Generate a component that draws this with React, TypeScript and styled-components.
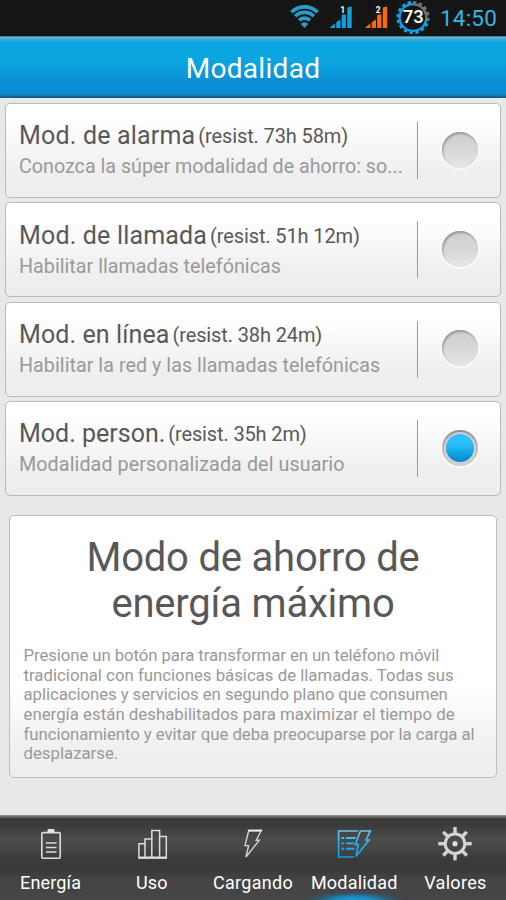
import React from 'react';
import styled, { createGlobalStyle } from 'styled-components';

const GlobalStyle = createGlobalStyle`
  * { box-sizing: border-box; }
  html, body { margin: 0; padding: 0; overflow: hidden; }
  body { font-family: Roboto, "Liberation Sans", sans-serif; }
  h1, h2, p { margin: 0; font-weight: 400; }
`;

const Screen = styled.div`
  width: 506px;
  height: 900px;
  display: flex;
  flex-direction: column;
  background: #e8e8e8;
  overflow: hidden;
`;

const StatusBar = styled.div`
  flex: none;
  height: 36px;
  display: flex;
  justify-content: flex-end;
  padding-right: 9px;
  background: #151515;
`;

const StatusIcons = styled.svg`
  display: block;
  flex: none;
  margin-right: 7px;
`;

const Clock = styled.div`
  width: 58px;
  font-size: 22.5px;
  line-height: 36px;
  letter-spacing: 0.2px;
  text-align: right;
  color: #33b5e5;
`;

const Header = styled.header`
  flex: none;
  height: 62px;
  padding-top: 3px;
  text-align: center;
  background: linear-gradient(
    #1c5d7c 0, #5fb3d6 1px, #5fb3d6 3px, #35a9d6 3px, #35a9d6 5px,
    #0ba5e0 5px, #0ba5e0 24px, #0a8fd6 46px, #0a8fd6 56px, #1681b8 59px,
    #155b80 61px, #155b80 62px
  );
`;

const HeaderTitle = styled.h1`
  font-size: 28px;
  line-height: 60px;
  letter-spacing: 0.3px;
  color: #fff;
`;

const ModeList = styled.div`
  flex: none;
  display: flex;
  flex-direction: column;
  gap: 4.4px;
  padding: 4px 5px 0;
  border-top: 1px solid #d9f1f9;
`;

const ModeRow = styled.div`
  height: 95px;
  display: flex;
  align-items: center;
  border: 1px solid #b9b9b9;
  border-radius: 5px;
  background: linear-gradient(#fff 0, #fff 18%, #f0eff0 72%, #eeeded 100%);
`;

const ModeText = styled.div`
  width: 411px;
  flex: none;
  align-self: stretch;
  padding: 17.3px 0 0 13px;
`;

const TitleLine = styled.div`
  height: 30px;
  display: flex;
  align-items: flex-start;
  line-height: 30px;
  white-space: nowrap;
  color: #585858;
`;

const ModeName = styled.h2<{ $tracking: number }>`
  font-size: 25px;
  letter-spacing: ${(p) => p.$tracking}px;
`;

const Endurance = styled.span<{ $tracking: number }>`
  margin-left: 3px;
  font-size: 20px;
  letter-spacing: ${(p) => p.$tracking}px;
`;

const Description = styled.p<{ $tracking: number }>`
  margin-top: 3px;
  font-size: 19.7px;
  line-height: 26px;
  letter-spacing: ${(p) => p.$tracking}px;
  white-space: nowrap;
  color: #999;
`;

const Divider = styled.div`
  width: 1px;
  height: 57px;
  background: #999;
`;

const RadioArea = styled.div`
  flex: 1;
  display: flex;
  justify-content: center;
  padding: 0 0 2px 1px;
`;

const Radio = styled.div<{ $selected: boolean }>`
  width: 36px;
  height: 36px;
  display: flex;
  align-items: center;
  justify-content: center;
  border-radius: 50%;
  background: ${(p) =>
    p.$selected
      ? 'linear-gradient(#8b8b8b, #b9b9b9 45%, #d6d6d6)'
      : 'linear-gradient(#cfcfcf, #d6d6d6 45%, #e6e6e6)'};
  box-shadow: ${(p) =>
    p.$selected
      ? '0 1px 1px 1px #fdfdfd, inset 0 0 1px #aaa'
      : '0 1px 1px 1px #fafafa, inset 1px 2px 2px #999'};
`;

const RadioRing = styled.div`
  width: 32px;
  height: 32px;
  display: flex;
  align-items: center;
  justify-content: center;
  border-radius: 50%;
  background: #d0d0d0;
`;

const RadioDot = styled.div`
  width: 28px;
  height: 28px;
  border-radius: 50%;
  background: linear-gradient(#31c1ff 0, #2abbfa 42%, #14a9e6 60%, #0a86d2);
`;

const InfoCard = styled.section`
  flex: none;
  height: 263px;
  margin: 19px 9px 0;
  padding: 19px 13px 0;
  border: 1px solid #bdbdbd;
  border-radius: 5px;
  background: linear-gradient(#fff 0, #fff 66%, #f1f0f0 88%, #eee 100%);
`;

const InfoTitle = styled.h2`
  font-size: 40px;
  line-height: 46px;
  letter-spacing: -0.2px;
  text-align: center;
  color: #585858;
`;

const InfoText = styled.p`
  margin-top: 19px;
  padding-left: 0.5px;
  font-size: 16.8px;
  line-height: 19.65px;
  white-space: nowrap;
  color: #999;
`;

const InfoLine = styled.span<{ $tracking: number }>`
  display: block;
  letter-spacing: ${(p) => p.$tracking}px;
`;

const TabBar = styled.nav`
  flex: none;
  height: 85px;
  margin-top: auto;
  display: grid;
  grid-template-columns: repeat(5, 1fr);
  background: linear-gradient(
    #a9abaa 0, #6e706f 1px, #6e706f 2px, #4b4d4c 3px, #3a3a3a 4px, #3b3b3b 10px,
    #4a4c4b 24px, #454746 34px, #3a3a3a 44px, #393939 54px, #434343 64px, #464646 100%
  );
`;

const Tab = styled.div<{ $active: boolean }>`
  display: flex;
  flex-direction: column;
  align-items: center;
  padding-top: 9px;
  background: ${(p) =>
    p.$active ? 'radial-gradient(ellipse 50px 9px at 50% 100%, #1b9fd8 0, #1d86b8 40%, rgba(24,110,152,.45) 70%, transparent 100%)' : 'none'};
`;

const TabIcon = styled.svg`
  display: block;
  width: 40px;
  height: 40px;
`;

const TabLabel = styled.span<{ $tracking: number }>`
  margin-top: 8px;
  font-size: 18px;
  line-height: 22px;
  letter-spacing: ${(p) => p.$tracking}px;
  white-space: nowrap;
  color: #fff;
`;

const modes = [
  { name: 'Mod. de alarma', t: 0.18, endurance: '(resist. 73h 58m)', et: -0.12, text: 'Conozca la súper modalidad de ahorro: so...', dt: 0 },
  { name: 'Mod. de llamada', t: 0.17, endurance: '(resist. 51h 12m)', et: -0.12, text: 'Habilitar llamadas telefónicas', dt: 0.03 },
  { name: 'Mod. en línea', t: 0.1, endurance: '(resist. 38h 24m)', et: -0.12, text: 'Habilitar la red y las llamadas telefónicas', dt: 0.05 },
  { name: 'Mod. person.', t: 0, endurance: '(resist. 35h 2m)', et: -0.14, text: 'Modalidad personalizada del usuario', dt: 0.1, selected: true },
];

const infoLines = [
  { text: 'Presione un botón para transformar en un teléfono móvil', t: -0.09 },
  { text: 'tradicional con funciones básicas de llamadas. Todas sus', t: 0 },
  { text: 'aplicaciones y servicios en segundo plano que consumen', t: -0.07 },
  { text: 'energía están deshabilitados para maximizar el tiempo de', t: 0.02 },
  { text: 'funcionamiento y evitar que deba preocuparse por la carga al', t: -0.06 },
  { text: 'desplazarse.', t: 0 },
];

const SignalBars = ({ x, color, sim }: { x: number; color: string; sim: string }) => (
  <g transform={`translate(${x} 0)`}>
    <g fill={color}>
      <path d="M0 28 L5.4 23.2 V28 Z" />
      <path d="M6.7 28V22.3L11 19.5V28Z" />
      <path d="M12.2 28V14.5H16.4V28Z" />
      <path d="M17.8 28V7.6L22.2 6.6V28Z" />
    </g>
    <text x="13.3" y="13" textAnchor="middle" fontSize="8.5" fontWeight="700" fill="#fff" fontFamily="Roboto, sans-serif">
      {sim}
    </text>
  </g>
);

const StatusGraphics = () => (
  <StatusIcons width="145" height="36" viewBox="287 0 145 36">
    <g fill="none" stroke="#2b9bcb" strokeWidth="3.7">
      <path d="M291.5 12.2 A18.5 18.5 0 0 1 317.5 12.2" />
      <path d="M295.2 16.3 A13.2 13.2 0 0 1 313.8 16.3" />
      <path d="M299 20.3 A7.8 7.8 0 0 1 310 20.3" />
    </g>
    <path d="M304.5 28 L300.6 23.8 A5.6 5.6 0 0 1 308.4 23.8 Z" fill="#2b9bcb" />
    <SignalBars x={329.5} color="#109fdf" sim="1" />
    <SignalBars x={365} color="#f9690e" sim="2" />
    <g fill="none">
      <circle cx="413" cy="17.5" r="15.2" stroke="#0f9fe0" strokeWidth="2.8" strokeDasharray="3.4 2.57" />
      <circle cx="413" cy="17.5" r="13.4" stroke="#0f9fe0" strokeWidth="2.4" />
      <path d="M413 2.3 A15.2 15.2 0 0 1 428.1 19" stroke="#151515" strokeWidth="3.2" />
      <path d="M413 2.3 A15.2 15.2 0 0 1 428.1 19" stroke="#707173" strokeWidth="2.8" strokeDasharray="3.4 2.57" />
      <path d="M413 4.1 A13.4 13.4 0 0 1 426.3 19" stroke="#707173" strokeWidth="2.4" />
    </g>
    <text x="413.3" y="23.3" textAnchor="middle" fontSize="18.5" fontWeight="500" fill="#fff" fontFamily="Roboto, sans-serif">
      73
    </text>
  </StatusIcons>
);

const BatteryIcon = () => (
  <TabIcon viewBox="0 0 40 40" fill="none" stroke="#dcdcdc">
    <rect x="10.8" y="8.6" width="18.4" height="25.6" rx="1.2" strokeWidth="1.6" />
    <rect x="16.5" y="5" width="7" height="3.6" rx="1" fill="#e4e4e4" stroke="none" />
    <path d="M15 19H25.5M15 23.5H25.5M15 28H25.5" strokeWidth="1.7" />
  </TabIcon>
);

const UsageIcon = () => (
  <TabIcon viewBox="0 0 40 40" fill="none" stroke="#dcdcdc" strokeWidth="1.5">
    <path d="M6.9 33.5V19.7H13V33.5" />
    <path d="M13 20V15H19.8V33.5" />
    <path d="M19.8 15V6.5H27.6V33.5" />
    <path d="M27.6 12.4H34.3V33.5" />
    <path d="M6.2 33.7H35" strokeWidth="2.4" />
  </TabIcon>
);

const ChargeIcon = () => (
  <TabIcon viewBox="0 0 40 40" fill="none" stroke="#d2d2d2" strokeWidth="1.4">
    <path d="M15.7 6.5H28.3L23.2 16.2H26.3L12.9 33L15.6 21.6H12Z" />
    <path d="M15.2 6.6H28.8" stroke="#f2f2f2" strokeWidth="1.8" />
  </TabIcon>
);

const ModeIcon = () => (
  <TabIcon viewBox="0 0 40 40" fill="none" strokeWidth="1.7">
    <defs>
      <linearGradient id="modeBlue" gradientUnits="userSpaceOnUse" x1="0" y1="6" x2="0" y2="34">
        <stop offset="0" stopColor="#77c3e6" />
        <stop offset="0.4" stopColor="#2cb6f3" />
        <stop offset="1" stopColor="#1196e0" />
      </linearGradient>
    </defs>
    <g stroke="url(#modeBlue)">
      <path d="M24 7H4.6V33H20" />
      <path d="M26.3 7H36.3L32 16H35L22 32.5L24.2 20.6H21.3Z" />
      <path d="M7.4 14H10.2M12 14H21.8M7.4 19.4H10.2M12 19.4H19.8M7.4 24.8H10.2M12 24.8H20.4" strokeWidth="1.9" />
    </g>
  </TabIcon>
);

const GearIcon = () => (
  <TabIcon viewBox="0 0 40 40" fill="none" stroke="#d4d4d4">
    <circle cx="20" cy="19.7" r="9.8" strokeWidth="3" />
    <circle cx="20" cy="19.7" r="2.6" fill="#dcdcdc" stroke="none" />
    {[0, 45, 90, 135, 180, 225, 270, 315].map((angle) => (
      <path key={angle} d="M20 9.5V3" strokeWidth="3.4" transform={`rotate(${angle} 20 19.7)`} />
    ))}
  </TabIcon>
);

const tabs = [
  { label: 'Energía', Icon: BatteryIcon, t: 0.15 },
  { label: 'Uso', Icon: UsageIcon, t: 0.2 },
  { label: 'Cargando', Icon: ChargeIcon, t: 0.3 },
  { label: 'Modalidad', Icon: ModeIcon, t: 0.2, active: true },
  { label: 'Valores', Icon: GearIcon, t: 0.3 },
];

export default function App() {
  return (
    <Screen>
      <GlobalStyle />
      <StatusBar>
        <StatusGraphics />
        <Clock>14:50</Clock>
      </StatusBar>
      <Header>
        <HeaderTitle>Modalidad</HeaderTitle>
      </Header>
      <ModeList>
        {modes.map((mode) => (
          <ModeRow key={mode.name}>
            <ModeText>
              <TitleLine>
                <ModeName $tracking={mode.t}>{mode.name}</ModeName>
                <Endurance $tracking={mode.et}>{mode.endurance}</Endurance>
              </TitleLine>
              <Description $tracking={mode.dt}>{mode.text}</Description>
            </ModeText>
            <Divider />
            <RadioArea>
              <Radio $selected={!!mode.selected}>
                {mode.selected && (
                  <RadioRing>
                    <RadioDot />
                  </RadioRing>
                )}
              </Radio>
            </RadioArea>
          </ModeRow>
        ))}
      </ModeList>
      <InfoCard>
        <InfoTitle>
          Modo de ahorro de
          <br />
          energía máximo
        </InfoTitle>
        <InfoText>
          {infoLines.map((line) => (
            <InfoLine key={line.text} $tracking={line.t}>
              {line.text}
            </InfoLine>
          ))}
        </InfoText>
      </InfoCard>
      <TabBar>
        {tabs.map(({ label, Icon, t, active }) => (
          <Tab key={label} $active={!!active}>
            <Icon />
            <TabLabel $tracking={t}>{label}</TabLabel>
          </Tab>
        ))}
      </TabBar>
    </Screen>
  );
}
